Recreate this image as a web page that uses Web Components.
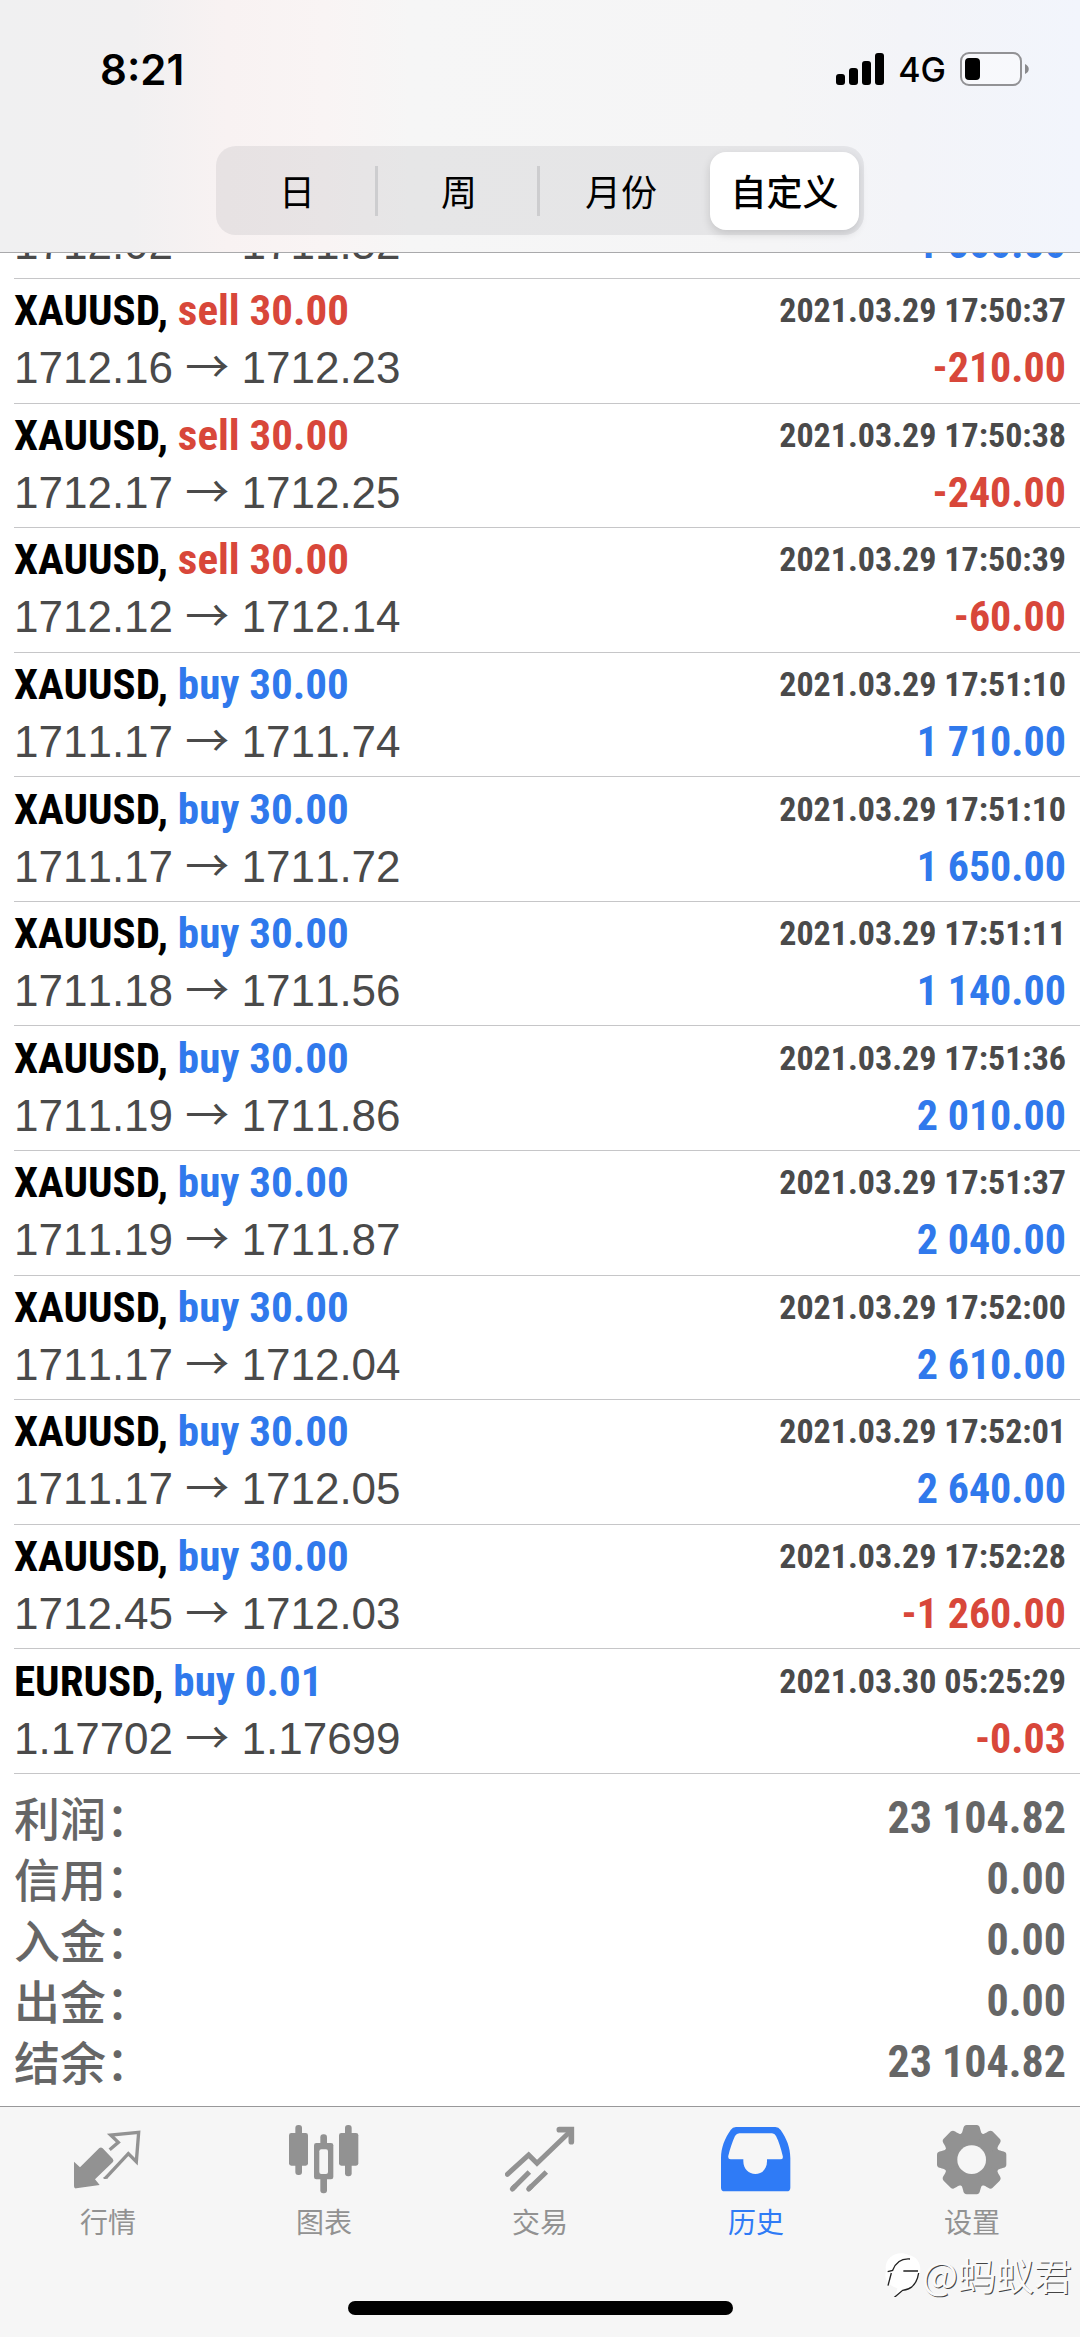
<!DOCTYPE html>
<html lang="zh-CN">
<head>
<meta charset="utf-8">
<meta name="viewport" content="width=device-width, initial-scale=1">
<title>历史</title>
<style>
  html, body { margin: 0; background: #fff; }
  body {
    --cond: "Roboto Condensed", "Liberation Sans Narrow", "Noto Sans CJK SC", sans-serif;
    --cjk: "Noto Sans CJK SC", sans-serif;
    --buy: #3079ec;
    --sell: #d8473a;
    --line: #c6c6c8;
    --bar: #f6f6f6;
    --muted: #929292;
    font-family: "Liberation Sans", "Noto Sans CJK SC", sans-serif;
    color: #000;
  }
</style>
</head>
<body>
<history-app>
  <status-bar slot="header" time="8:21" network="4G"></status-bar>
  <period-switch slot="header"></period-switch>

  <trade-row clipped side="sell" open="1712.02" close="1711.52" profit="1 500.00"></trade-row>
  <trade-row symbol="XAUUSD" side="sell" lots="30.00" time="2021.03.29 17:50:37" open="1712.16" close="1712.23" profit="-210.00"></trade-row>
  <trade-row symbol="XAUUSD" side="sell" lots="30.00" time="2021.03.29 17:50:38" open="1712.17" close="1712.25" profit="-240.00"></trade-row>
  <trade-row symbol="XAUUSD" side="sell" lots="30.00" time="2021.03.29 17:50:39" open="1712.12" close="1712.14" profit="-60.00"></trade-row>
  <trade-row symbol="XAUUSD" side="buy" lots="30.00" time="2021.03.29 17:51:10" open="1711.17" close="1711.74" profit="1 710.00"></trade-row>
  <trade-row symbol="XAUUSD" side="buy" lots="30.00" time="2021.03.29 17:51:10" open="1711.17" close="1711.72" profit="1 650.00"></trade-row>
  <trade-row symbol="XAUUSD" side="buy" lots="30.00" time="2021.03.29 17:51:11" open="1711.18" close="1711.56" profit="1 140.00"></trade-row>
  <trade-row symbol="XAUUSD" side="buy" lots="30.00" time="2021.03.29 17:51:36" open="1711.19" close="1711.86" profit="2 010.00"></trade-row>
  <trade-row symbol="XAUUSD" side="buy" lots="30.00" time="2021.03.29 17:51:37" open="1711.19" close="1711.87" profit="2 040.00"></trade-row>
  <trade-row symbol="XAUUSD" side="buy" lots="30.00" time="2021.03.29 17:52:00" open="1711.17" close="1712.04" profit="2 610.00"></trade-row>
  <trade-row symbol="XAUUSD" side="buy" lots="30.00" time="2021.03.29 17:52:01" open="1711.17" close="1712.05" profit="2 640.00"></trade-row>
  <trade-row symbol="XAUUSD" side="buy" lots="30.00" time="2021.03.29 17:52:28" open="1712.45" close="1712.03" profit="-1 260.00"></trade-row>
  <trade-row symbol="EURUSD" side="buy" lots="0.01" time="2021.03.30 05:25:29" open="1.17702" close="1.17699" profit="-0.03"></trade-row>

  <summary-line slot="summary" label="利润：">23 104.82</summary-line>
  <summary-line slot="summary" label="信用：">0.00</summary-line>
  <summary-line slot="summary" label="入金：">0.00</summary-line>
  <summary-line slot="summary" label="出金：">0.00</summary-line>
  <summary-line slot="summary" label="结余：">23 104.82</summary-line>

  <tab-bar slot="footer">
    <tab-item icon="quotes">行情</tab-item>
    <tab-item icon="chart">图表</tab-item>
    <tab-item icon="trade">交易</tab-item>
    <tab-item icon="history" current>历史</tab-item>
    <tab-item icon="settings">设置</tab-item>
  </tab-bar>
  <photo-mark slot="footer">@蚂蚁君</photo-mark>
</history-app>

<script>
class BaseElement extends HTMLElement {
  connectedCallback() {
    if (this.shadowRoot) return;
    this.attachShadow({ mode: 'open' }).innerHTML = this.render();
  }
  attr(name) { return this.getAttribute(name) || ''; }
}

/* Screen frame: header, growing list, totals, footer */
customElements.define('history-app', class extends BaseElement {
  render() {
    return `<style>
      :host { display: flex; flex-direction: column; min-height: 100vh; }
      header {
        box-sizing: border-box; height: 253px; border-bottom: 1px solid #a9a9ab;
        background: linear-gradient(90deg, #f0f0f1 0, #f1f0f1 12%, #f8f2f2 21%, #f9f4f4 30%, #f6f6f6 38%, #f5f5f6 72%, #f3f4f8 84%, #f2f5fc 100%);
      }
      main { flex: 1; display: flex; flex-direction: column; }
      .rows { flex: 1; display: flex; flex-direction: column; padding-left: 14px; }
      .totals { padding: 14px 14px 13px; }
      footer { position: relative; background: var(--bar); border-top: 1px solid #98989a; }
    </style>
    <header><slot name="header"></slot></header>
    <main>
      <div class="rows" role="list"><slot></slot></div>
      <div class="totals"><slot name="summary"></slot></div>
    </main>
    <footer><slot name="footer"></slot></footer>`;
  }
});

customElements.define('status-bar', class extends BaseElement {
  render() {
    return `<style>
      :host { display: flex; justify-content: space-between; align-items: center; height: 46px; padding: 46px 50px 54px 100px; font-family: Inter, sans-serif; }
      .time { font-size: 42px; font-weight: 600; }
      .right { display: flex; align-items: center; gap: 14px; }
      .net { font-size: 34px; font-weight: 500; }
      svg { display: block; }
    </style>
    <span class="time">${this.attr('time')}</span>
    <span class="right">
      <svg width="48" height="32" viewBox="0 0 48 32" aria-hidden="true"><rect y="21" width="9" height="11" rx="3"/><rect x="13" y="15" width="9" height="17" rx="3"/><rect x="26" y="8" width="9" height="24" rx="3"/><rect x="39" width="9" height="32" rx="3"/></svg>
      <span class="net">${this.attr('network')}</span>
      <svg width="70" height="34" viewBox="0 0 70 34" aria-hidden="true"><rect x="1" y="1" width="60" height="32" rx="8" fill="#fff" fill-opacity=".4" stroke="#929295" stroke-width="2"/><rect x="5" y="6" width="15" height="22" rx="4"/><path d="M65 12c5 2 5 8 0 10z" fill="#89898c"/></svg>
    </span>`;
  }
});

customElements.define('period-switch', class extends BaseElement {
  render() {
    return `<style>
      :host { display: flex; justify-content: center; }
      .track { box-sizing: border-box; display: grid; grid-template-columns: repeat(4, 1fr); width: 60%; height: 89px; padding: 6px 0 5px; border-radius: 20px; background: rgba(118, 118, 120, .12); }
      button { margin: 0; padding: 0 0 2px; border: 0; background: none; font: 400 36px/76px var(--cjk); color: #000; }
      .divided { background: linear-gradient(#cdcdcf, #cdcdcf) right center / 3px 50px no-repeat; }
      .on { margin: 0 5px 0 8px; background: #fff; border-radius: 16px; font-weight: 500; box-shadow: 0 4px 10px rgba(0, 0, 0, .14); }
    </style>
    <div class="track">
      <button type="button" class="divided">日</button>
      <button type="button" class="divided">周</button>
      <button type="button">月份</button>
      <button type="button" class="on" aria-pressed="true">自定义</button>
    </div>`;
  }
});

/* One closed deal; a clipped row shows only the foot of its price line */
customElements.define('trade-row', class extends BaseElement {
  render() {
    const clipped = this.hasAttribute('clipped');
    const tone = this.attr('profit').startsWith('-') ? 'sell' : 'buy';
    this.setAttribute('role', 'listitem');
    return `<style>
      :host { flex: 1 0 auto; display: flex; flex-direction: column; justify-content: center; border-bottom: 1px solid var(--line); padding: 2px 14px 5px 0; }
      :host([clipped]) { flex: none; height: 25px; padding: 0 14px 0 0; justify-content: flex-end; overflow: hidden; }
      :host([clipped]) .line { margin-bottom: 5px; }
      .line { flex: none; display: flex; justify-content: space-between; align-items: center; height: 58px; line-height: 58px; white-space: nowrap; }
      .deal, .profit { font-family: var(--cond); font-weight: 700; font-size: 43px; }
      .profit { font-size: 42px; }
      .time { font-family: var(--cond); font-weight: 700; font-size: 34px; color: #4a4a4a; }
      .price { font-size: 44px; font-kerning: none; color: #4a4a4a; }
      .arrow { font-family: var(--cjk); line-height: 0; }
      .buy { color: var(--buy); }
      .sell { color: var(--sell); }
    </style>
    ${clipped ? '' : `<div class="line">
      <span class="deal">${this.attr('symbol')}, <span class="${this.attr('side')}">${this.attr('side')} ${this.attr('lots')}</span></span>
      <span class="time">${this.attr('time')}</span>
    </div>`}
    <div class="line">
      <span class="price">${this.attr('open')} <span class="arrow">→</span> ${this.attr('close')}</span>
      <span class="profit ${tone}">${this.attr('profit')}</span>
    </div>`;
  }
});

customElements.define('summary-line', class extends BaseElement {
  render() {
    return `<style>
      :host { display: flex; justify-content: space-between; height: 61px; line-height: 61px; color: #666; }
      .label { font-family: var(--cjk); font-weight: 500; font-size: 46px; line-height: 56px; }
      .value { font-family: var(--cond); font-weight: 700; font-size: 44px; }
    </style>
    <span class="label">${this.attr('label')}</span><span class="value"><slot></slot></span>`;
  }
});

customElements.define('tab-bar', class extends BaseElement {
  render() {
    return `<style>
      :host { display: flex; flex-direction: column; align-items: center; }
      nav { display: flex; align-self: stretch; height: 194px; }
      .home { width: 385px; height: 14px; margin-bottom: 22px; border-radius: 7px; background: #000; }
    </style>
    <nav><slot></slot></nav><div class="home"></div>`;
  }
});

const tooth = 'M-32-77C-26-82-26-97-22-101Q-19-104-15-104H15Q19-104 22-101C26-97 26-82 32-77L0 0Z';
const icons = {
  quotes: ['219 104 210 210', `<path d="M222 214L240 231 298 173Q303 169 308 174L338 205Q343 211 338 216L285 267 299 284 229 294Q222 295 222 288Z"/>
    <path d="M329 178L355 156 332 134 416 126 409 214 385 190 318 262" fill="none" stroke="currentColor" stroke-width="10" stroke-linejoin="miter"/><path d="M309 262L318 256 324 263 319 266H312Z"/>`],
  chart: ['867 104 210 210', `<rect x="886" y="104" width="20" height="150" rx="9"/><rect x="867" y="128" width="57" height="98" rx="7"/>
    <rect x="1035" y="104" width="20" height="154" rx="9"/><rect x="1017" y="128" width="58" height="98" rx="7"/>
    <rect x="961" y="132" width="20" height="177" rx="9"/><rect x="942" y="158" width="58" height="109" rx="7"/><rect x="958" y="177" width="26" height="74" rx="6" fill="#f6f6f6"/>`],
  trade: ['315 104 210 210', `<g fill="none" stroke="currentColor" stroke-width="15" stroke-linecap="round" stroke-linejoin="miter"><path d="M322 252L386 194 411 219 512 122"/><path d="M478 118H514V154" stroke-width="17"/><path d="M337 296L388 245M386 296L439 245" stroke-linecap="butt"/><path d="M337 296L345 288M386 296L394 288"/></g>`],
  history: ['963 104 210 210', `<path fill-rule="evenodd" d="M1008 110H1126Q1136 110 1142 119C1160 145 1171 172 1171 203V292Q1171 303 1160 303H974Q963 303 963 292V203C963 172 974 145 992 119Q998 110 1008 110ZM1018 129Q1010 129 1005 137C997 154 990 176 985 196Q983 207 992 207H1030V213C1030 237 1047 251 1066 251S1101 237 1101 213V207H1141Q1151 207 1148 196C1143 176 1137 154 1128 137Q1124 129 1116 129Z"/>`],
  settings: ['771 104 210 210', `<g transform="translate(875 208)"><circle r="84"/>${[0, 45, 90, 135, 180, 225, 270, 315].map(a => `<path d="${tooth}" transform="rotate(${a})"/>`).join('')}<circle r="43" fill="#f6f6f6"/></g>`]
};

customElements.define('tab-item', class extends BaseElement {
  render() {
    const [box, shape] = icons[this.attr('icon')];
    return `<style>
      :host { flex: 1; display: flex; color: var(--muted); }
      :host([current]) { color: #2f7bf6; }
      a { flex: 1; display: flex; flex-direction: column; align-items: center; gap: 7px; padding-top: 18px; color: inherit; text-decoration: none; font: 400 28px/38px var(--cjk); }
      svg { display: block; width: 70px; height: 70px; fill: currentColor; }
    </style>
    <a href="#${this.attr('icon')}"><svg viewBox="${box}" aria-hidden="true">${shape}</svg><span><slot></slot></span></a>`;
  }
});

/* Embossed author mark lying over the footer corner */
customElements.define('photo-mark', class extends BaseElement {
  render() {
    return `<style>
      :host { position: absolute; right: 8px; bottom: 38px; display: flex; align-items: center; font: 400 38px/50px var(--cjk); color: #fafafa; text-shadow: 1px 1px 0 #444; }
      svg { display: block; width: 40px; height: 46px; }
    </style>
    <svg viewBox="0 0 120 138" aria-hidden="true"><path d="M12 60C4 20 46-4 80 12 112 18 122 50 110 78 98 104 74 112 40 138L46 112C20 104 4 84 12 60Z" fill="#fff"/><g fill="none" stroke="#222" stroke-width="4"><path d="M17 62L32 58C42 32 60 22 84 24M64 60H108M28 66L18 104"/><path d="M110 66C104 104 84 116 62 118L36 140"/></g></svg><span><slot></slot></span>`;
  }
});
</script>
</body>
</html>
